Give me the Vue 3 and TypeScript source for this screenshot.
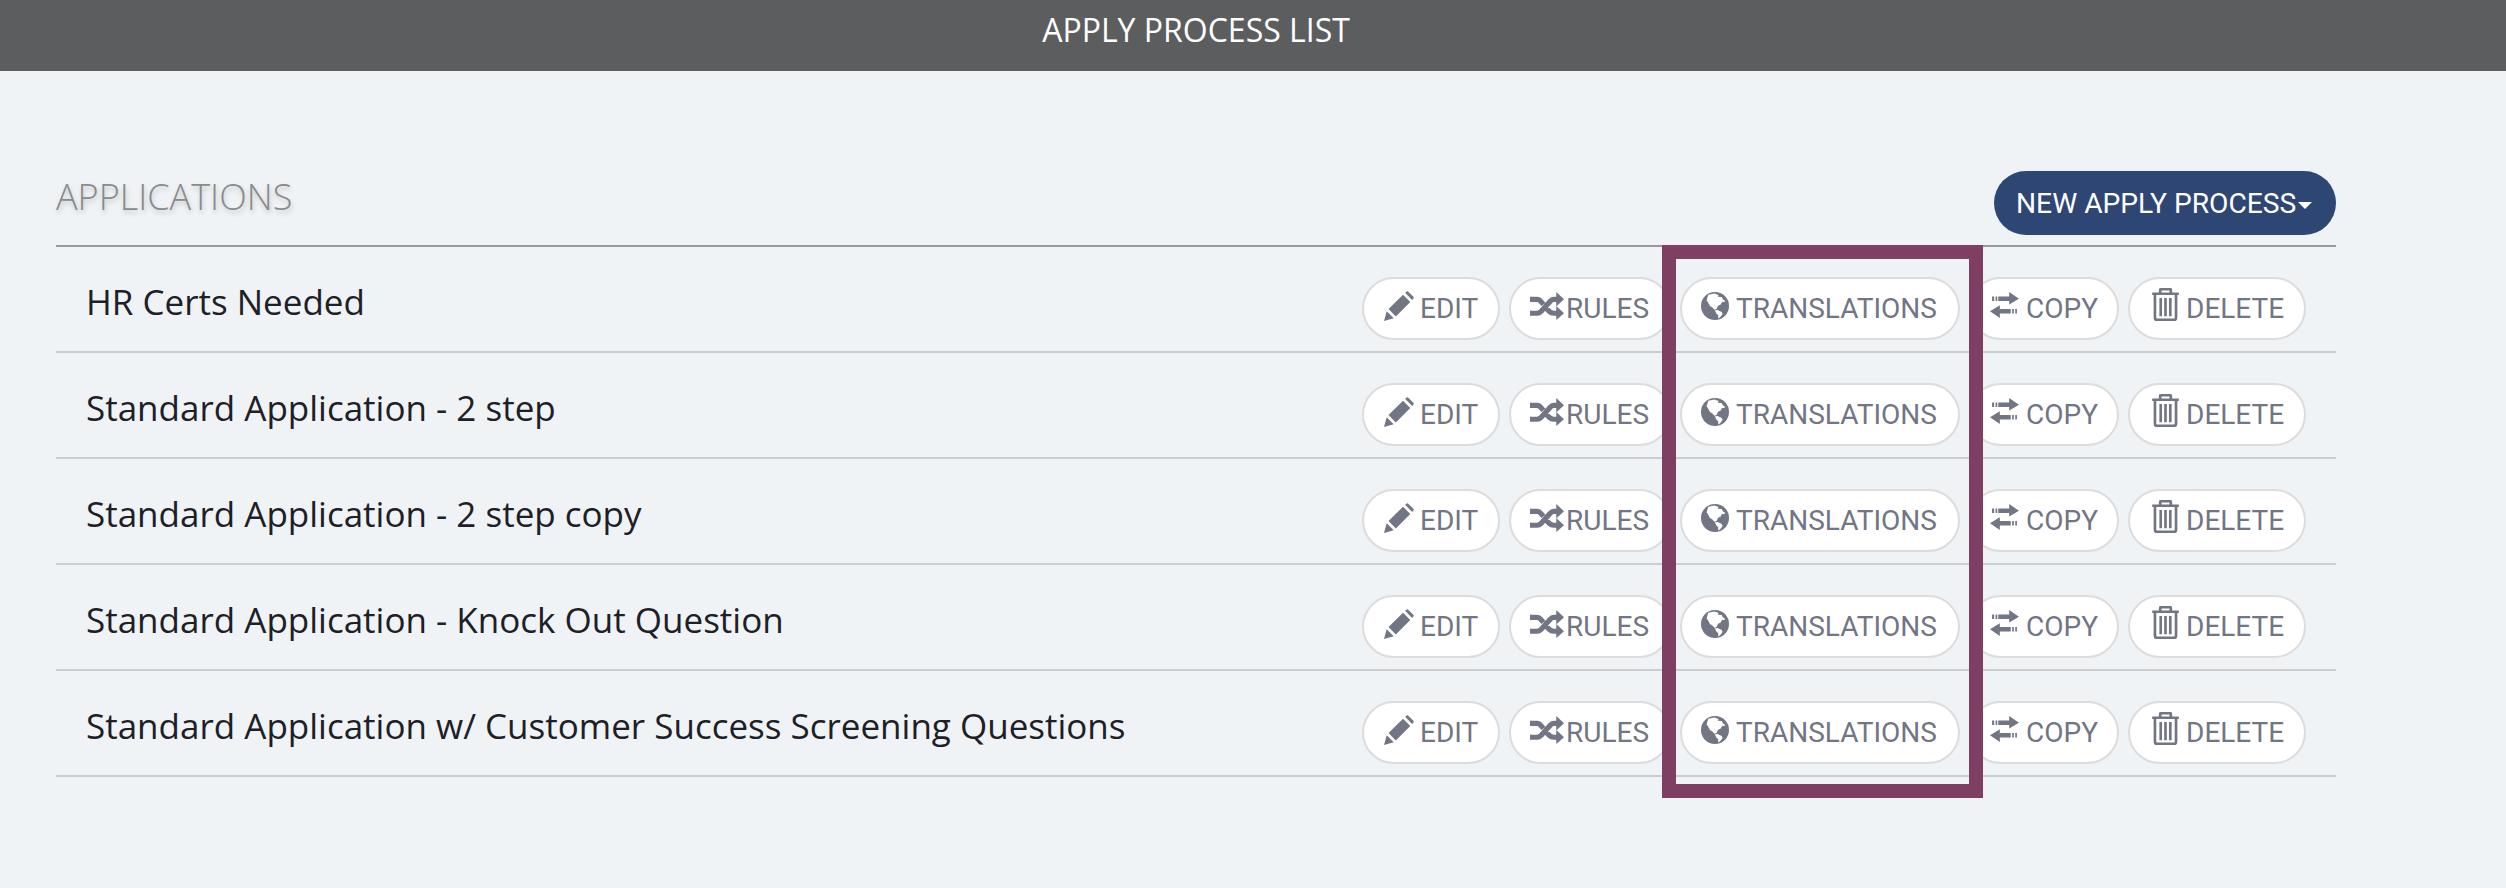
<script setup lang="ts">
const rows: string[] = [
  'HR Certs Needed',
  'Standard Application - 2 step',
  'Standard Application - 2 step copy',
  'Standard Application - Knock Out Question',
  'Standard Application w/ Customer Success Screening Questions',
]
</script>

<template>
  <div class="page">
    <header class="topbar"><h1 class="topbar-title">APPLY PROCESS LIST</h1></header>
    <main class="content">
      <div class="section-head">
        <h2 class="section-title">APPLICATIONS</h2>
        <button class="new-btn">NEW APPLY PROCESS<span class="caret"></span></button>
      </div>
      <div class="list">
        <div v-for="name in rows" :key="name" class="row">
          <div class="row-name">{{ name }}</div>
          <div class="actions">
            <button class="pill pill-edit">
              <svg class="ic ic-edit" width="30" height="30" viewBox="0 0 29 29"><path d="M0 29 L2.6 19.6 L9.4 26.4 Z M4.4 17.4 L18.4 3.6 L25.4 10.6 L11.4 24.6 Z M20.4 1.8 L22 .4 Q22.6 0 23.2 .4 L28.6 5.8 Q29 6.4 28.6 7 L27.2 8.6 Z" /></svg>EDIT
            </button>
            <button class="pill pill-rules">
              <svg class="ic ic-rules" width="34" height="28" viewBox="0 0 33 27"><path d="M0 7 H7 Q9 7 10.5 9 L13 12 M16 16 L19 19 Q20.5 20.5 23 20.5 H27 M0 20.5 H7 Q9 20.5 10.5 19 L20 8.5 Q21 7 23 7 H27" fill="none" stroke="#717584" stroke-width="5" /><path d="M25.5 0 L33 7 L25.5 14 Z M25.5 13.5 L33 20.5 L25.5 27 Z" /></svg>RULES
            </button>
            <button class="pill pill-trans">
              <svg class="ic ic-globe" width="28" height="28" viewBox="0 0 27 27"><circle cx="13.5" cy="13.5" r="13.5" /><path class="land" d="M7 2.6 L13 1.4 L17 3 L16.2 4.6 L20 4.8 L21 7 L23.6 8.6 L21.6 10 L20.4 9.4 L19 12 L16.4 13.2 L15 16.4 L13 17 L11 15 L8.6 13.4 L7 10.4 L5.4 8 Z M13.4 17.6 L16 17.4 L20 19.2 L20.8 21.2 L18.4 24.4 L16.6 25.6 L16.6 22.4 L14.6 20.6 Z" /></svg>TRANSLATIONS
            </button>
            <button class="pill pill-copy">
              <svg class="ic ic-copy" width="29" height="26" viewBox="0 0 28 25"><path d="M18.5 0 L28 6.5 L18.5 12 V8.6 H8 V4.4 H18.5 Z M2 4.4 H4 V8.6 H2 Z M5.4 4.4 H7 V8.6 H5.4 Z M9.5 12.8 V16.4 H20 V20.6 H9.5 V25 L0 18.6 Z M21.4 16.4 H23 V20.6 H21.4 Z M24.4 16.4 H26 V20.6 H24.4 Z" /></svg>COPY
            </button>
            <button class="pill pill-del">
              <svg class="ic ic-del" width="27" height="33" viewBox="0 0 25 31"><path d="M7.5 4.6 V2 Q7.5 1 8.5 1 H16.5 Q17.5 1 17.5 2 V4.6 M0 5.4 H25 M2.6 6 V28 Q2.6 30 4.6 30 H20.4 Q22.4 30 22.4 28 V6 M8 9.5 V26.5 M12.5 9.5 V26.5 M17 9.5 V26.5" fill="none" stroke="#717584" stroke-width="2.5" /></svg>DELETE
            </button>
          </div>
        </div>
        <div class="highlight"></div>
      </div>
    </main>
  </div>
</template>

<style scoped>
.page {
  width: 2506px;
  height: 888px;
  overflow: hidden;
  background: #eff3f6;
  font-family: "Open Sans", sans-serif;
}
.topbar {
  height: 71px;
  background: #5c5d5f;
  display: flex;
  align-items: center;
  justify-content: center;
  padding-right: 114px;
  box-sizing: border-box;
}
.topbar-title {
  margin: 0;
  font-size: 32px;
  font-weight: 400;
  color: #fff;
  padding-bottom: 12px;
}
.content {
  width: 2280px;
  margin-left: 56px;
  padding-top: 100px;
}
.section-head {
  display: flex;
  justify-content: space-between;
  align-items: flex-start;
  height: 74px;
}
.section-title {
  margin: 0;
  padding-top: 4px;
  font-size: 36px;
  line-height: 44px;
  font-weight: 300;
  color: #8a8a8a;
  text-shadow: 1px 3px 5px rgba(0, 0, 0, .2);
}
.new-btn {
  height: 64px;
  width: 342px;
  padding: 0 0 0 22px;
  border: 0;
  border-radius: 32px;
  background: #2d4674;
  color: #fff;
  font-family: Roboto, sans-serif;
  font-size: 28.2px;
  display: flex;
  align-items: center;
}
.caret {
  width: 0;
  height: 0;
  margin-left: 2px;
  margin-top: 4px;
  border-left: 7px solid transparent;
  border-right: 7px solid transparent;
  border-top: 7px solid #fff;
}
.list {
  position: relative;
  border-top: 2px solid #999;
}
.row {
  height: 106px;
  box-sizing: border-box;
  border-bottom: 2px solid #ccc;
  padding: 30px 30px 0 30px;
  display: flex;
  justify-content: space-between;
  align-items: flex-start;
}
.row-name {
  font-size: 35px;
  line-height: 48px;
  margin-top: 1px;
  color: #1d2026;
}
.actions {
  display: flex;
  gap: 9px;
}
.pill {
  height: 63px;
  box-sizing: border-box;
  padding: 0 0 0 19px;
  border: 2px solid #dcdcdc;
  border-radius: 32px;
  background: #fff;
  color: #717584;
  font-family: Roboto, sans-serif;
  font-size: 28px;
  display: flex;
  align-items: center;
  white-space: nowrap;
}
.pill-edit { width: 138px; padding-left: 20px; }
.pill-rules { width: 162px; }
.pill-trans { width: 280px; }
.pill-copy { width: 150px; }
.pill-del { width: 178px; }
.ic {
  fill: #717584;
  flex: none;
  margin-bottom: 6px;
}
.ic-edit { margin-right: 6px; }
.ic-rules { margin-right: 2px; }
.ic-globe { margin-right: 7px; }
.ic-copy { margin-right: 7px; margin-bottom: 8px; }
.ic-del { margin-left: 3px; margin-right: 7px; margin-bottom: 9px; }
.land { fill: #fff; }
.highlight {
  position: absolute;
  left: 1606px;
  top: -2px;
  width: 321px;
  height: 553px;
  box-sizing: border-box;
  border: 14px solid #7f3f63;
  pointer-events: none;
}
</style>

<style>
body { background: #eff3f6; }
</style>
